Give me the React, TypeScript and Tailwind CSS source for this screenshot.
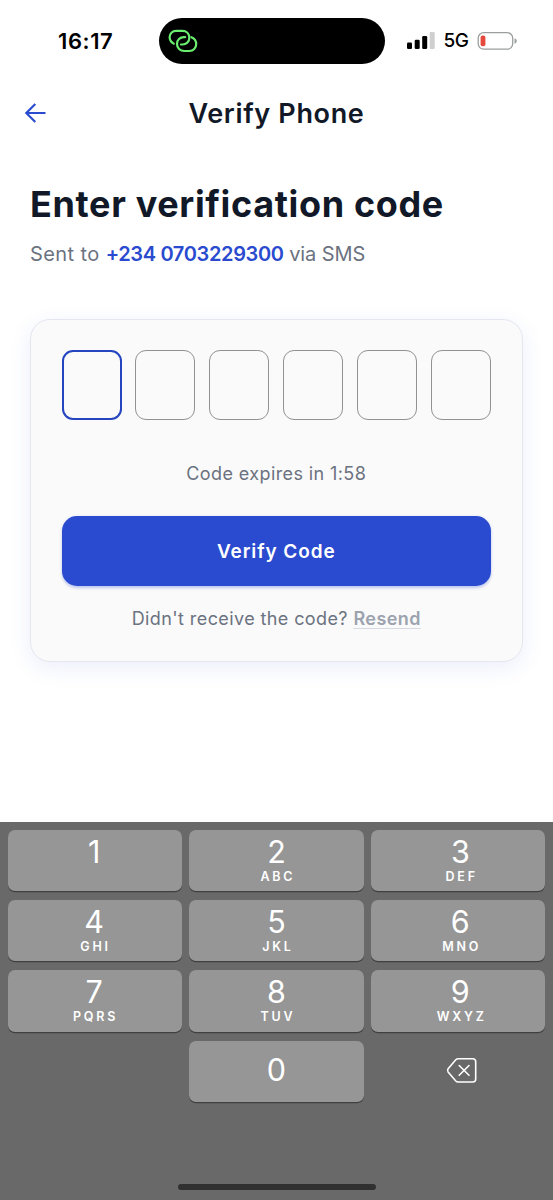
import { clsx } from "clsx";

interface IKey {
  digit: string;
  letters?: string;
}

const keys: IKey[] = [
  { digit: "1", letters: "" },
  { digit: "2", letters: "ABC" },
  { digit: "3", letters: "DEF" },
  { digit: "4", letters: "GHI" },
  { digit: "5", letters: "JKL" },
  { digit: "6", letters: "MNO" },
  { digit: "7", letters: "PQRS" },
  { digit: "8", letters: "TUV" },
  { digit: "9", letters: "WXYZ" },
];

const LinkIcon = () => (
  <svg width="30" height="24" viewBox="0 0 30 24" fill="none" stroke="#69ee70" strokeWidth="2.2" strokeLinecap="round">
    <path d="M5.8 14.6C3.3 13.2 1.6 10.9 1.6 8.2C1.6 4.6 4.3 1.9 8.1 1.9H14.4C18.4 1.9 21.3 4.8 21.3 8.9C21.3 12.8 18.3 15.5 14.4 15.5H13" />
    <path d="M23.4 8.2C26.3 9.4 28.2 12 28.2 15C28.2 19 25.3 22 21.4 22H16.3C12 22 9 19 9 15C9 11 12 8.1 15.8 8.1H17.2" />
  </svg>
);

const StatusBar = () => (
  <div className="flex h-[81px] items-center">
    <span className="w-[159px] pt-[1px] pl-[58px] text-[22px] font-semibold tracking-[0.6px] text-black">
      16:17
    </span>
    <div className="flex h-[46px] w-[226px] items-center rounded-full bg-black pl-[9px]">
      <LinkIcon />
    </div>
    <svg className="ml-[22px]" width="28" height="18" viewBox="0 0 28 18">
      <rect x="0" y="10.5" width="5" height="6.5" rx="1.3" />
      <rect x="7.7" y="7.7" width="5" height="9.3" rx="1.3" />
      <rect x="15.2" y="4" width="5" height="13" rx="1.3" />
      <rect x="22.7" y="0" width="5" height="17" rx="1.3" fill="#cfcfcf" />
    </svg>
    <span className="mt-[2px] ml-[8.5px] w-[25.5px] text-[19px] font-medium tracking-[-0.6px] text-black">
      5G
    </span>
    <svg className="ml-[8px]" width="41" height="20" viewBox="0 0 41 20">
      <rect x="1.2" y="1.7" width="34.5" height="16.5" rx="5.5" fill="none" stroke="#9b9e9e" strokeWidth="1.3" />
      <rect x="3.6" y="4.6" width="4.8" height="10.6" rx="2" fill="#e5493b" />
      <path d="M37.5 7.2Q39.8 8 39.8 10Q39.8 12 37.5 12.8Z" fill="#9b9e9e" />
    </svg>
  </div>
);

const BackspaceIcon = () => (
  <svg width="32" height="27" viewBox="0 0 32 27" fill="none" stroke="white" strokeWidth="1.6" strokeLinecap="round" strokeLinejoin="round">
    <path d="M12.2 1.8H26.7Q29.7 1.8 29.7 4.8V22Q29.7 25 26.7 25H12.2Q10.8 25 9.8 24L2.1 15Q1 13.4 2.1 11.8L9.8 2.8Q10.8 1.8 12.2 1.8Z" />
    <path d="M13.2 8.5L23 18.3M23 8.5L13.2 18.3" />
  </svg>
);

const Key = ({ digit, letters }: IKey) => (
  <button
    className={clsx(
      "flex h-[61.5px] flex-col items-center rounded-[7px] bg-[#969696] text-white shadow-[0_1.3px_0_#404040]",
      letters === undefined && "col-start-2",
      ["3", "6", "9"].includes(digit) && "pl-[4px]",
      ["1", "4", "7"].includes(digit) && "pr-[1px]"
    )}
  >
    <span
      className={clsx(
        "text-[30.5px] leading-[36px] font-normal",
        letters === undefined ? "mt-[11.5px]" : "mt-[4px]"
      )}
    >
      {digit}
    </span>
    {letters && (
      <span className="-mr-[2.8px] text-[12.5px] leading-[14px] font-semibold tracking-[2.8px]">
        {letters}
      </span>
    )}
  </button>
);

const Keyboard = () => (
  <div className="flex h-[378px] flex-col bg-[#696969] px-[7.5px] pt-[7.5px]">
    <div className="grid grid-cols-3 gap-x-[7.5px] gap-y-[8.9px]">
      {keys.map((k) => (
        <Key key={k.digit} digit={k.digit} letters={k.letters} />
      ))}
      <Key digit="0" />
      <button className="flex items-center justify-center pb-[2px] pl-[8px]">
        <BackspaceIcon />
      </button>
    </div>
    <div className="mx-auto mt-auto mb-[10px] h-[6px] w-[198px] rounded-full bg-[#303030]" />
  </div>
);

export default function App() {
  return (
    <div className="flex h-[1200px] w-[553px] flex-col overflow-hidden bg-white font-['Inter',sans-serif]">
      <StatusBar />

      <header className="grid h-[64px] grid-cols-[60px_1fr_60px] items-center">
        <svg className="ml-[25px]" width="22" height="20" viewBox="0 0 22 20" fill="none" stroke="#2a4bcf" strokeWidth="2.1">
          <path d="M10.3 1L1.3 10L10.3 19M1.3 10H20.5" />
        </svg>
        <h1 className="pt-[1px] text-center text-[27px] leading-[36px] font-semibold tracking-[0.65px] whitespace-nowrap text-[#111827]">
          Verify Phone
        </h1>
      </header>

      <main className="flex-1 px-[30px] pt-[34px]">
        <h2 className="text-[36px] leading-[50px] font-bold tracking-[0.65px] whitespace-nowrap text-[#111827]">
          Enter verification code
        </h2>
        <p className="mt-[10px] text-[20px] leading-[30px] tracking-[0.4px] whitespace-nowrap text-[#6b7280]">
          Sent to <span className="font-semibold tracking-[-0.35px] text-[#2a4bcf]">+234 0703229300</span>
          <span className="tracking-[-0.1px]"> via SMS</span>
        </p>

        <section className="mt-[50px] h-[343px] w-[492.5px] rounded-[20px] border-[1.5px] border-[#e5e7f0] bg-[#fafafa] px-[30.5px] pt-[29.5px] shadow-[0_6px_22px_rgba(42,75,207,0.09)]">
          <div className="flex justify-between">
            {[0, 1, 2, 3, 4, 5].map((i) => (
              <div
                key={i}
                className={clsx(
                  "h-[70px] w-[60px] rounded-[11px]",
                  i === 0 ? "border-2 border-[#2444c0]" : "border border-[#929292]"
                )}
              />
            ))}
          </div>
          <p className="mt-[40px] text-center text-[18px] leading-[27px] tracking-[0.4px] whitespace-nowrap text-[#6b7280]">
            Code expires in 1:58
          </p>
          <button className="mt-[29px] h-[70px] w-full rounded-[15px] bg-[#2a4bcf] pt-[3px] text-[19px] font-semibold tracking-[0.9px] text-white shadow-[0_1.5px_3px_rgba(42,75,207,0.3)]">
            Verify Code
          </button>
          <p className="mt-[19px] text-center text-[18px] leading-[27px] tracking-[0.4px] whitespace-nowrap text-[#6b7280]">
            Didn't receive the code?{" "}
            <span className="font-semibold text-[#9ca3af] underline decoration-[#d5dae3] decoration-1 underline-offset-[3px]">
              Resend
            </span>
          </p>
        </section>
      </main>

      <Keyboard />
    </div>
  );
}
